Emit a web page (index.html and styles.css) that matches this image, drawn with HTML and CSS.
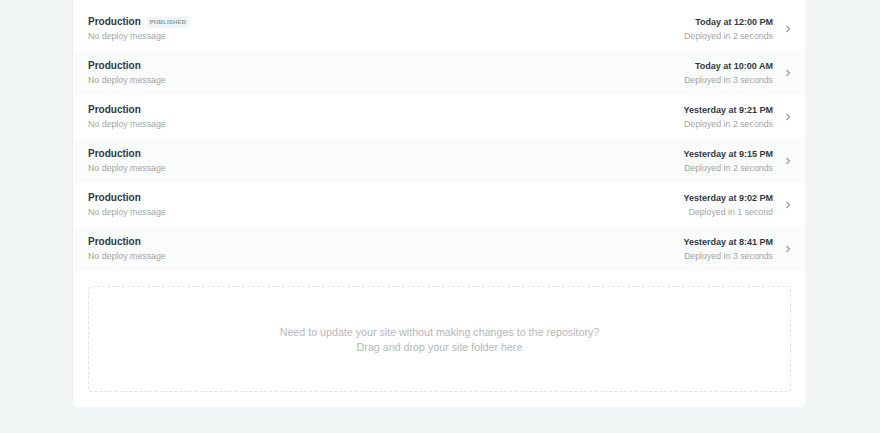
FILE: index.html
```html
<!DOCTYPE html>
<html>
<head>
<meta charset="utf-8">
<link rel="stylesheet" href="styles.css">
</head>
<body>
<div class="page">
  <div class="card">
    <ul class="deploys">
      <li class="row">
        <div class="left">
          <div class="title">Production <span class="badge">PUBLISHED</span></div>
          <div class="sub">No deploy message</div>
        </div>
        <div class="right">
          <div class="time">Today at 12:00 PM</div>
          <div class="sub">Deployed in 2 seconds</div>
        </div>
        <svg class="chev" width="6" height="8" viewBox="0 0 6 8"><path d="M1.5 1 L4.5 4 L1.5 7" fill="none" stroke="#9aa3a6" stroke-width="1.4"/></svg>
      </li>
      <li class="row">
        <div class="left">
          <div class="title">Production</div>
          <div class="sub">No deploy message</div>
        </div>
        <div class="right">
          <div class="time">Today at 10:00 AM</div>
          <div class="sub">Deployed in 3 seconds</div>
        </div>
        <svg class="chev" width="6" height="8" viewBox="0 0 6 8"><path d="M1.5 1 L4.5 4 L1.5 7" fill="none" stroke="#9aa3a6" stroke-width="1.4"/></svg>
      </li>
      <li class="row">
        <div class="left">
          <div class="title">Production</div>
          <div class="sub">No deploy message</div>
        </div>
        <div class="right">
          <div class="time">Yesterday at 9:21 PM</div>
          <div class="sub">Deployed in 2 seconds</div>
        </div>
        <svg class="chev" width="6" height="8" viewBox="0 0 6 8"><path d="M1.5 1 L4.5 4 L1.5 7" fill="none" stroke="#9aa3a6" stroke-width="1.4"/></svg>
      </li>
      <li class="row">
        <div class="left">
          <div class="title">Production</div>
          <div class="sub">No deploy message</div>
        </div>
        <div class="right">
          <div class="time">Yesterday at 9:15 PM</div>
          <div class="sub">Deployed in 2 seconds</div>
        </div>
        <svg class="chev" width="6" height="8" viewBox="0 0 6 8"><path d="M1.5 1 L4.5 4 L1.5 7" fill="none" stroke="#9aa3a6" stroke-width="1.4"/></svg>
      </li>
      <li class="row">
        <div class="left">
          <div class="title">Production</div>
          <div class="sub">No deploy message</div>
        </div>
        <div class="right">
          <div class="time">Yesterday at 9:02 PM</div>
          <div class="sub">Deployed in 1 second</div>
        </div>
        <svg class="chev" width="6" height="8" viewBox="0 0 6 8"><path d="M1.5 1 L4.5 4 L1.5 7" fill="none" stroke="#9aa3a6" stroke-width="1.4"/></svg>
      </li>
      <li class="row">
        <div class="left">
          <div class="title">Production</div>
          <div class="sub">No deploy message</div>
        </div>
        <div class="right">
          <div class="time">Yesterday at 8:41 PM</div>
          <div class="sub">Deployed in 3 seconds</div>
        </div>
        <svg class="chev" width="6" height="8" viewBox="0 0 6 8"><path d="M1.5 1 L4.5 4 L1.5 7" fill="none" stroke="#9aa3a6" stroke-width="1.4"/></svg>
      </li>
    </ul>
    <div class="dropzone">
      <p>Need to update your site without making changes to the repository?</p>
      <p>Drag and drop your site folder here</p>
    </div>
  </div>
</div>
</body>
</html>
```

FILE: styles.css
```css
html, body {
  margin: 0;
  padding: 0;
  background: #f3f6f6;
  font-family: "Liberation Sans", Arial, sans-serif;
}
.page {
  padding: 0 74px 0 73px;
}
.card {
  margin-top: -20px;
  padding-top: 27px;
  background: #fff;
  border-radius: 4px;
  box-shadow: 0 1px 1px rgba(0,0,0,0.08), 0 0 0 1px rgba(0,0,0,0.015);
  padding-bottom: 15px;
}
.deploys {
  list-style: none;
  margin: 0;
  padding: 0;
}
.row {
  display: flex;
  align-items: center;
  height: 44px;
  box-sizing: border-box;
  padding: 0 15px;
}
.row:nth-child(even) {
  background: #fafbfb;
}
.left {
  flex: 1;
}
.right {
  text-align: right;
}
.title {
  font-size: 10px;
  font-weight: bold;
  color: #2e3a3f;
  line-height: 14px;
  display: flex;
  align-items: center;
}
.time {
  font-size: 9px;
  font-weight: bold;
  color: #2e3a3f;
  line-height: 14px;
}
.sub {
  font-size: 8.8px;
  color: #9ea7aa;
  line-height: 14px;
}
.badge {
  margin-left: 6px;
  background: #eef3f3;
  color: #8a9a9a;
  font-size: 6px;
  font-weight: bold;
  letter-spacing: 0.2px;
  padding: 2px 3px;
  border-radius: 2px;
  line-height: 7px;
}
.chev {
  margin-left: 12px;
  margin-right: 0;
}
.dropzone {
  margin: 15px 15px 0;
  height: 106px;
  box-sizing: border-box;
  border: 1px dashed #dfe3e4;
  border-radius: 4px;
  display: flex;
  flex-direction: column;
  justify-content: center;
  align-items: center;
  padding-top: 2px;
}
.dropzone p {
  margin: 0;
  font-size: 10.7px;
  color: #b3b8ba;
  line-height: 15px;
}
```
